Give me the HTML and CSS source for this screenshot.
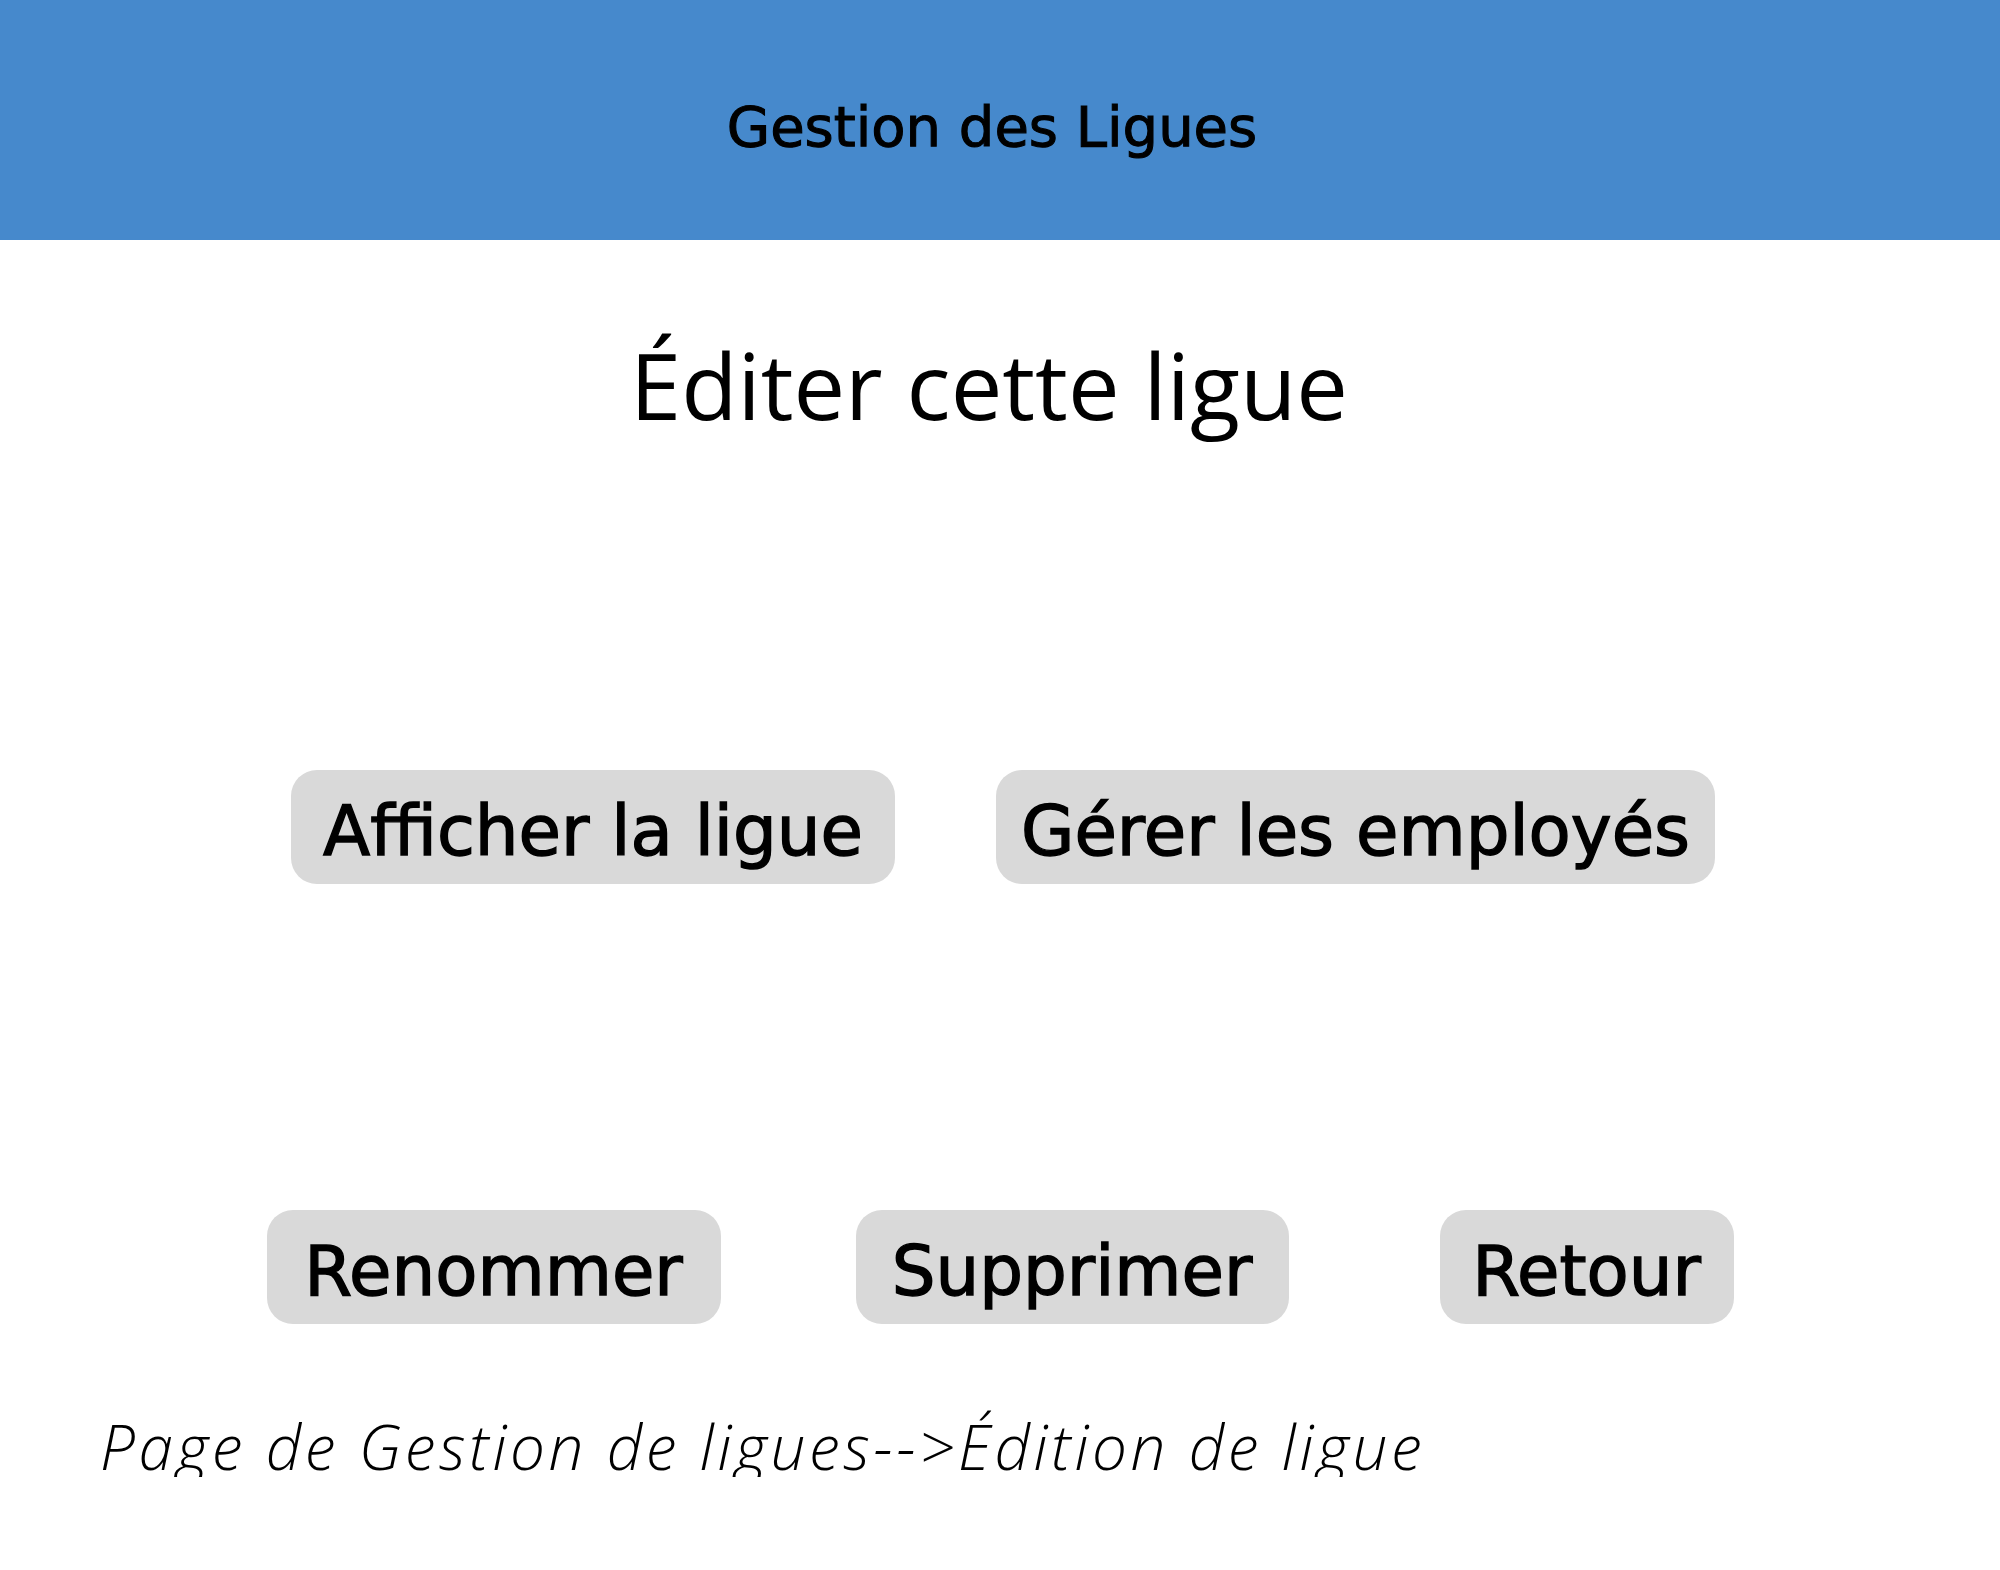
FILE: index.html
```html
<!DOCTYPE html>
<html lang="fr">
<head>
<meta charset="utf-8">
<title>Gestion des Ligues</title>
<link rel="stylesheet" href="styles.css">
</head>
<body>
<header class="topbar">
  <div class="topbar-title">Gestion des Ligues</div>
</header>
<main class="content">
  <h1 class="page-title">Éditer cette ligue</h1>
  <div class="row row-primary">
    <button class="btn btn-show">Afficher la ligue</button>
    <button class="btn btn-staff">Gérer les employés</button>
  </div>
  <div class="row row-secondary">
    <button class="btn btn-rename">Renommer</button>
    <button class="btn btn-delete">Supprimer</button>
    <button class="btn btn-back">Retour</button>
  </div>
  <p class="breadcrumb">Page de Gestion de ligues--&gt;Édition de ligue</p>
</main>
</body>
</html>
```
FILE: styles.css
```css
html, body {
  margin: 0;
  padding: 0;
  background: #ffffff;
}

body {
  width: 2000px;
  color: #000;
  font-family: "DejaVu Sans", sans-serif;
}

.topbar {
  background: #4689cc;
  height: 240px;
  box-sizing: border-box;
  padding: 99px 16px 85px 0;
  text-align: center;
}

.topbar-title {
  font-size: 56px;
  line-height: 56px;
  font-weight: 400;
  -webkit-text-stroke: 1.1px #000;
}

.content {
  display: flex;
  flex-direction: column;
}

.page-title {
  margin: 99px 0 0;
  padding-right: 22px;
  text-align: center;
  font-family: "Open Sans", sans-serif;
  font-weight: 400;
  font-size: 92px;
  line-height: 92px;
}

.row {
  display: flex;
  justify-content: center;
}

.row-primary {
  margin-top: 339px;
  padding-left: 6px;
  gap: 101px;
}

.row-secondary {
  margin-top: 326px;
  gap: 135px;
}

.btn {
  font-family: "DejaVu Sans", sans-serif;
  font-size: 69px;
  line-height: 69px;
  color: #000;
  -webkit-text-stroke: 1.4px #000;
  background: #d9d9d9;
  border: none;
  border-radius: 26px;
  height: 114px;
  box-sizing: border-box;
  padding: 27px 0 18px;
  margin: 0;
  text-align: center;
  white-space: nowrap;
}

.btn-show { width: 604px; }
.btn-staff { width: 719px; }
.btn-rename { width: 454px; }
.btn-delete { width: 433px; }
.btn-back {
  width: 294px;
  margin-left: 16px;
}

.breadcrumb {
  margin: 91px 0 0;
  padding-left: 100px;
  font-family: "Open Sans", sans-serif;
  font-style: italic;
  font-weight: 350;
  font-size: 62px;
  line-height: 62px;
  letter-spacing: 3.6px;
}
```
